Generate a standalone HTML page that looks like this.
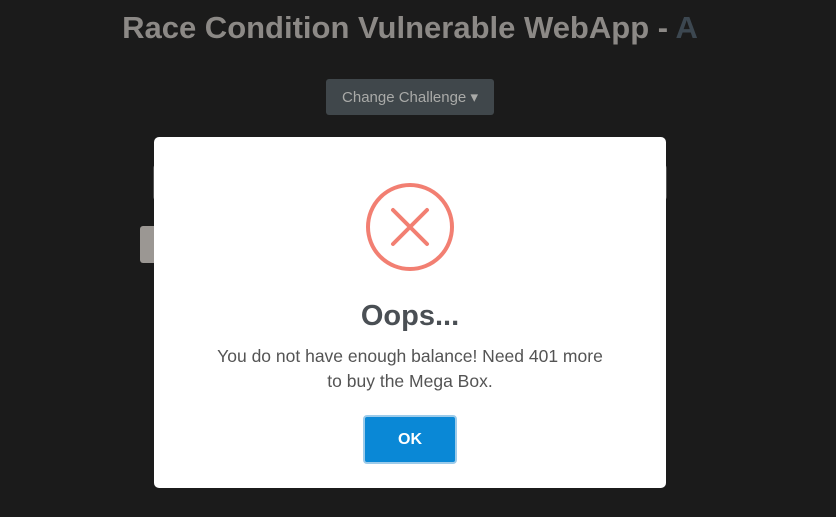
<!DOCTYPE html>
<html><head><style>
body{margin:0;width:836px;height:517px;background:#1b1b1b;font-family:"Liberation Sans",sans-serif;position:relative;overflow:hidden}
.t{position:absolute;top:10px;left:0;width:820px;text-align:center;font-size:31px;font-weight:bold;color:#8c8986}
.t span{color:#3c4750}
.cb{position:absolute;left:326px;top:79px;width:168px;height:36px;background:#40474b;border-radius:3px;color:#a9aaa8;font-size:15px;line-height:38px;text-align:center}
.in{position:absolute;left:153px;top:165px;width:512px;height:33px;border:1px solid #555;border-radius:3px}
.gb{position:absolute;left:140px;top:226px;width:30px;height:37px;background:#9b9793;border-radius:3px}
.m{position:absolute;left:154px;top:137px;width:512px;height:351px;background:#fff;border-radius:5px}
.o{position:absolute;top:163px;left:0;width:100%;text-align:center;font-size:29px;font-weight:bold;color:#4a4f54}
.p{position:absolute;top:207px;left:0;width:100%;text-align:center;font-size:17.5px;line-height:25px;color:#545454}
.ok{position:absolute;left:209px;top:278px;width:94px;height:49px;background:#0a88d6;border:2px solid #9ccbea;box-sizing:border-box;border-radius:4px;color:#fff;font-weight:bold;font-size:16px;line-height:45px;text-align:center}
</style></head><body>
<div class="t">Race Condition Vulnerable WebApp - <span>A</span></div>
<div class="cb">Change Challenge ▾</div>
<div class="in"></div>
<div class="gb"></div>
<div class="m">
<svg style="position:absolute;left:210px;top:46px" width="92" height="90" viewBox="0 0 92 90"><ellipse cx="46" cy="44" rx="42" ry="42" fill="none" stroke="#f27f72" stroke-width="4"/><path d="M29 27L63 61M63 27L29 61" stroke="#f27f72" stroke-width="4" stroke-linecap="round"/></svg>
<div class="o">Oops...</div>
<div class="p">You do not have enough balance! Need 401 more<br>to buy the Mega Box.</div>
<div class="ok">OK</div>
</div>
</body></html>
